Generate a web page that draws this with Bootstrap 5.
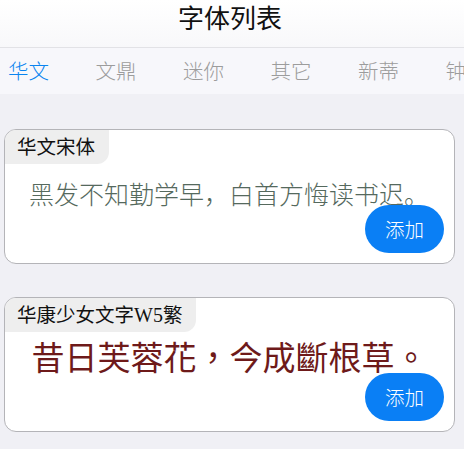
<!DOCTYPE html>
<html lang="zh">
<head>
<meta charset="utf-8">
<title>字体列表</title>
<link href="https://cdn.jsdelivr.net/npm/bootstrap@5.3.0/dist/css/bootstrap.min.css" rel="stylesheet">
<style>
html,body{height:449px;overflow:hidden}
body{background:#f0f0f5;font-family:"Noto Sans CJK SC","Liberation Sans",sans-serif;width:464px}
.top-title{height:48px;background:linear-gradient(#fff,#f8f8fa);border-bottom:1px solid #e2e2e6;font-size:26px;line-height:34px;color:#111;text-align:center;padding-right:4px}
.tab-strip{height:46px;background:#f7f7fb;font-size:20.5px;line-height:44px;color:#9c9c9c;white-space:nowrap;overflow:hidden;padding-left:8px;gap:46.5px;font-weight:300}
.tab-on{color:#0a84f0}
.font-box{height:135px;margin:0 9px 33px 4px;background:#fff;border:1px solid #b4b4b8;border-radius:12px;overflow:hidden;position:relative}
.box-list{padding-top:35px}
.font-tag{display:inline-block;height:34px;padding:0 14px 0 12px;background:#eeeeee;border-bottom-right-radius:12px;font-size:19.5px;line-height:32px;color:#111}
.font-tag span{font-family:"Liberation Serif",serif;font-size:20px}
.sample{white-space:nowrap;text-align:center}
.sample-a{font-size:25px;font-weight:300;line-height:36px;color:#55695d;margin-top:11px;padding-right:1px}
.sample-b{font-size:33px;line-height:44px;color:#6e1a1a;font-weight:400;margin-top:2px;font-family:"Noto Sans CJK TC","Noto Sans CJK SC",sans-serif}
.add-btn{position:absolute;right:10px;bottom:10px;width:79px;height:48px;padding:0;border:0;border-radius:24px;background:#0a7ff5;color:#fff;font-size:19.5px;font-weight:300;line-height:48px}
</style>
</head>
<body>
<div class="top-title">字体列表</div>
<div class="tab-strip d-flex">
<span class="tab-on">华文</span><span>文鼎</span><span>迷你</span><span>其它</span><span>新蒂</span><span>钟齐</span>
</div>
<div class="box-list">
<div class="font-box">
<div class="font-tag">华文宋体</div>
<div class="sample sample-a">黑发不知勤学早&#xFF0C;白首方悔读书迟。</div>
<button class="btn add-btn" type="button">添加</button>
</div>
<div class="font-box">
<div class="font-tag">华康少女文字<span>W5</span>繁</div>
<div class="sample sample-b" lang="zh-Hant">昔日芙蓉花&#xFF0C;今成斷根草。</div>
<button class="btn add-btn" type="button">添加</button>
</div>
</div>
<script src="https://cdn.jsdelivr.net/npm/bootstrap@5.3.0/dist/js/bootstrap.bundle.min.js"></script>
</body>
</html>
